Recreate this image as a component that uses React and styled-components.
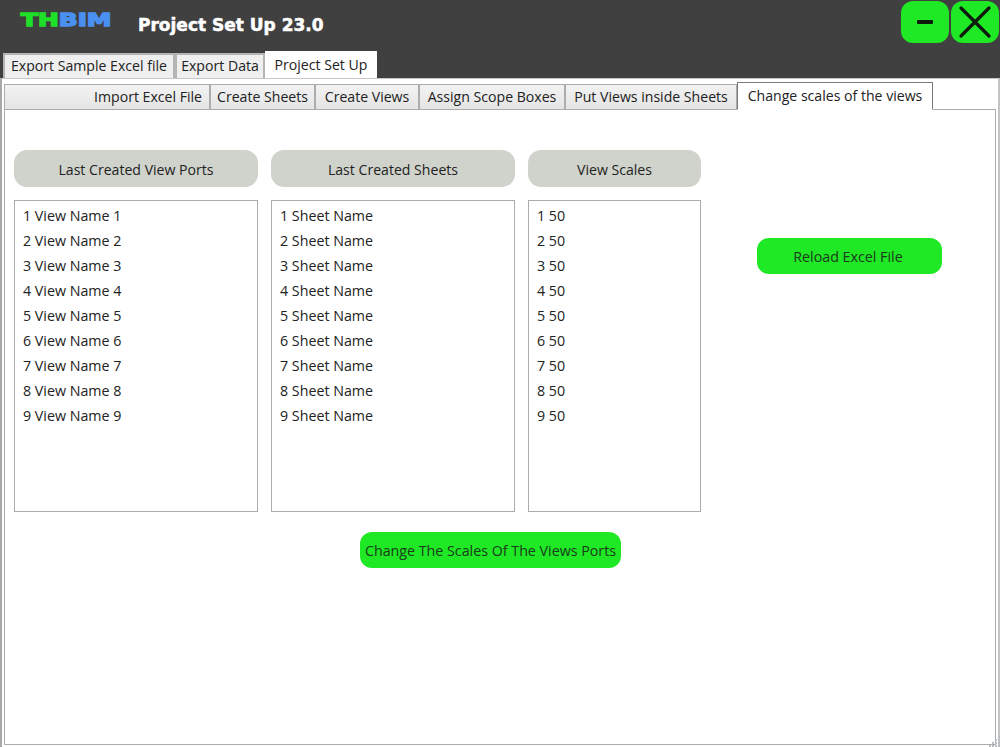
import React from "react";
import styled, { createGlobalStyle } from "styled-components";

const GlobalStyle = createGlobalStyle`
    html, body {
        margin: 0;
        padding: 0;
        background: #ffffff;
    }
    body {
        font-family: "Open Sans", "Noto Sans", sans-serif;
        color: #1a1a1a;
    }
`;

const views = [1, 2, 3, 4, 5, 6, 7, 8, 9];
const topTabs = [
    { label: "Export Sample Excel file", width: 172 },
    { label: "Export Data", width: 90 },
    { label: "Project Set Up", width: 112, active: true },
];
const innerTabs = [
    { label: "Import Excel File", width: 206, right: true },
    { label: "Create Sheets", width: 105 },
    { label: "Create Views", width: 104 },
    { label: "Assign Scope Boxes", width: 146 },
    { label: "Put Views inside Sheets", width: 172 },
    { label: "Change scales of the views", width: 196, active: true },
];

function App() {
    return (
        <Window>
            <GlobalStyle />
            <Header>
                <TitleRow>
                    <Logo><LogoText><span>TH</span><b>BIM</b></LogoText></Logo>
                    <Title>Project Set Up 23.0</Title>
                    <WindowButtons>
                        <WindowButton>
                            <svg width="16" height="4" viewBox="0 0 16 4">
                                <rect width="16" height="4" rx="1" fill="#0c1a0c" />
                            </svg>
                        </WindowButton>
                        <WindowButton>
                            <svg width="36" height="36" viewBox="0 0 36 36">
                                <path d="M4 4 L32 32 M32 4 L4 32" stroke="#0c1a0c" strokeWidth="3.2" strokeLinecap="round" />
                            </svg>
                        </WindowButton>
                    </WindowButtons>
                </TitleRow>
                <TopTabs>
                    {topTabs.map(t => (
                        <TopTab key={t.label} $active={t.active} $width={t.width}>{t.label}</TopTab>
                    ))}
                </TopTabs>
            </Header>
            <Body>
                <InnerTabs>
                    {innerTabs.map(t => (
                        <InnerTab key={t.label} $active={t.active} $right={t.right} $width={t.width}>{t.label}</InnerTab>
                    ))}
                </InnerTabs>
                <Panel>
                    <Columns>
                        <Column>
                            <ColumnTitle>Last Created View Ports</ColumnTitle>
                            <List>
                                {views.map(n => <li key={n}>{n} View Name {n}</li>)}
                            </List>
                        </Column>
                        <Column>
                            <ColumnTitle>Last Created Sheets</ColumnTitle>
                            <List>
                                {views.map(n => <li key={n}>{n} Sheet Name</li>)}
                            </List>
                        </Column>
                        <Column>
                            <ColumnTitle>View Scales</ColumnTitle>
                            <List>
                                {views.map(n => <li key={n}>{n} 50</li>)}
                            </List>
                        </Column>
                        <SideColumn>
                            <GreenButton $width={185} $nudge={3}>Reload Excel File</GreenButton>
                        </SideColumn>
                    </Columns>
                    <Actions>
                        <GreenButton $width={261}>Change The Scales Of The Views Ports</GreenButton>
                    </Actions>
                </Panel>
                <Grip>
                    <svg width="12" height="12" viewBox="0 0 12 12">
                        <path d="M10 1h2v2h-2zM7 4h2v2H7zM10 4h2v2h-2zM4 7h2v2H4zM7 7h2v2H7zM10 7h2v2h-2zM1 10h2v2H1zM4 10h2v2H4zM7 10h2v2H7zM10 10h2v2h-2z" fill="#b9bcc0" />
                    </svg>
                </Grip>
            </Body>
        </Window>
    );
}

const Window = styled.div`
    width: 1000px;
    height: 747px;
    display: flex;
    flex-direction: column;
    overflow: hidden;
    background: #ffffff;
`;

const Header = styled.div`
    height: 78px;
    flex: none;
    display: flex;
    flex-direction: column;
    justify-content: space-between;
    background: #404040;
`;

const TitleRow = styled.div`
    display: flex;
    align-items: flex-start;
    padding: 1px 1px 0 21px;
`;

const Logo = styled.div`
    width: 117px;
    flex: none;
    margin-top: 9px;
    font-family: "DejaVu Sans", sans-serif;
    font-size: 17px;
    line-height: 20px;
`;

const LogoText = styled.div`
    display: inline-block;
    transform: scaleX(1.46);
    transform-origin: left center;
    span, b {
        font-weight: 700;
        -webkit-text-stroke: 1.3px currentColor;
    }
    span {
        color: #1fe028;
    }
    b {
        color: #4a90f0;
    }
`;

const Title = styled.div`
    margin-top: 12px;
    font-family: "DejaVu Sans", sans-serif;
    font-size: 17px;
    font-weight: 700;
    line-height: 24px;
    color: #ffffff;
    -webkit-text-stroke: 0.5px #ffffff;
`;

const WindowButtons = styled.div`
    margin-left: auto;
    display: flex;
    gap: 2px;
`;

const WindowButton = styled.button`
    width: 48px;
    height: 42px;
    padding: 0;
    border: none;
    border-radius: 12px;
    display: flex;
    align-items: center;
    justify-content: center;
    background: #1fe824;
`;

const TopTabs = styled.div`
    display: flex;
    align-items: flex-end;
    padding-left: 3px;
`;

const TopTab = styled.div`
    width: ${p => p.$width}px;
    height: ${p => (p.$active ? "27px" : "25px")};
    box-sizing: border-box;
    flex: none;
    display: flex;
    align-items: center;
    justify-content: center;
    padding-bottom: 2px;
    font-size: 14.1px;
    white-space: nowrap;
    background: ${p => (p.$active ? "#ffffff" : "#efefef")};
    border: 2px solid ${p => (p.$active ? "#ffffff" : "#b4b4b4")};
    border-bottom: none;
    color: #222222;
`;

const Body = styled.div`
    position: relative;
    flex: 1;
    min-height: 0;
    box-sizing: border-box;
    display: flex;
    flex-direction: column;
    padding: 2px;
    background: #ffffff;
    border-left: 2px solid #a8a8a8;
    border-right: 2px solid #c4c4c4;
    border-top: 1px solid #c8c8c8;
`;

const InnerTabs = styled.div`
    height: 28px;
    flex: none;
    display: flex;
    align-items: flex-end;
`;

const InnerTab = styled.div`
    width: ${p => p.$width}px;
    height: ${p => (p.$active ? "28px" : "25px")};
    box-sizing: border-box;
    flex: none;
    display: flex;
    align-items: center;
    justify-content: ${p => (p.$right ? "flex-end" : "center")};
    padding: 0 ${p => (p.$right ? "7px" : "0")} 1px 0;
    font-size: 14.1px;
    white-space: nowrap;
    color: #222222;
    background: ${p => (p.$active ? "#ffffff" : "linear-gradient(#f3f3f3, #e4e4e4)")};
    border: 1px solid ${p => (p.$active ? "#7a7a7a" : "#acacac")};
    border-bottom: ${p => (p.$active ? "1px solid #ffffff" : "none")};
    margin-bottom: ${p => (p.$active ? "-1px" : "0")};
    position: relative;
    z-index: ${p => (p.$active ? 1 : 0)};
`;

const Panel = styled.div`
    flex: 1;
    min-height: 0;
    box-sizing: border-box;
    padding: 40px 0 0 9px;
    border: 1px solid #acacac;
`;

const Columns = styled.div`
    display: grid;
    grid-template-columns: 244px 244px 173px 241px;
    column-gap: 13px;
`;

const Column = styled.div`
    display: flex;
    flex-direction: column;
    gap: 13px;
`;

const ColumnTitle = styled.div`
    height: 37px;
    box-sizing: border-box;
    padding-top: 2px;
    border-radius: 13px;
    display: flex;
    align-items: center;
    justify-content: center;
    font-size: 14.1px;
    color: #222222;
    background: #d0d3cb;
`;

const List = styled.ul`
    height: 312px;
    box-sizing: border-box;
    margin: 0;
    padding: 2px 8px;
    list-style: none;
    border: 1px solid #acacac;
    li {
        height: 25px;
        line-height: 25px;
        font-size: 14.25px;
        color: #222222;
        white-space: nowrap;
    }
`;

const SideColumn = styled.div`
    display: flex;
    justify-content: flex-end;
    padding: 88px 0 0 0;
    margin-right: 13px;
`;

const GreenButton = styled.button`
    width: ${p => p.$width}px;
    height: 36px;
    padding: 0 ${p => p.$nudge || 0}px 0 0;
    border: none;
    border-radius: 12px;
    font-family: inherit;
    font-size: 14.25px;
    white-space: nowrap;
    color: #1c3a1c;
    background: #1fe824;
`;

const Actions = styled.div`
    display: flex;
    justify-content: center;
    width: 953px;
    margin-top: 20px;
`;

const Grip = styled.div`
    position: absolute;
    right: -2px;
    bottom: 0;
    line-height: 0;
`;

export default App;
